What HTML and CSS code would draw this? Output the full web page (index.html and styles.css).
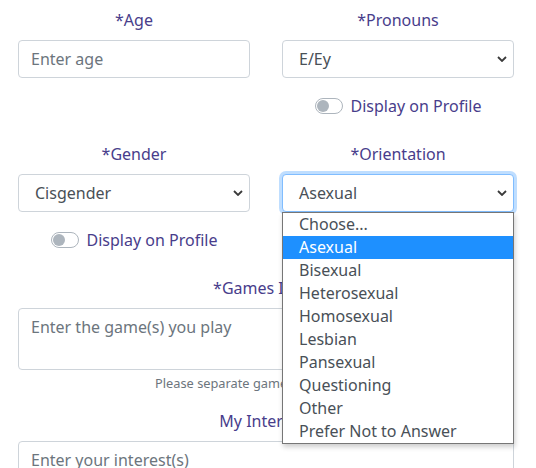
FILE: index.html
```html
<!DOCTYPE html>
<html lang="en">
<head>
<meta charset="utf-8">
<title>Profile form</title>
<link rel="stylesheet" href="styles.css">
</head>
<body>
<form class="form">
  <div class="row">
    <div class="group">
      <label class="label">*Age</label>
      <div class="control"><span class="placeholder">Enter age</span></div>
    </div>
    <div class="group">
      <label class="label">*Pronouns</label>
      <div class="control select">
        <span class="value">E/Ey</span>
        <svg class="chevron" width="10" height="6" viewBox="0 0 10 6"><path d="M1 1l4 4 4-4" fill="none" stroke="#3a3a3a" stroke-width="1.8"/></svg>
      </div>
      <div class="switch-row">
        <span class="switch"><span class="knob"></span></span>
        <span class="switch-label">Display on Profile</span>
      </div>
    </div>
  </div>
  <div class="row">
    <div class="group">
      <label class="label">*Gender</label>
      <div class="control select">
        <span class="value">Cisgender</span>
        <svg class="chevron" width="10" height="6" viewBox="0 0 10 6"><path d="M1 1l4 4 4-4" fill="none" stroke="#3a3a3a" stroke-width="1.8"/></svg>
      </div>
      <div class="switch-row">
        <span class="switch"><span class="knob"></span></span>
        <span class="switch-label">Display on Profile</span>
      </div>
    </div>
    <div class="group">
      <label class="label">*Orientation</label>
      <div class="select-wrap">
        <div class="control select focused">
          <span class="value">Asexual</span>
          <svg class="chevron" width="10" height="6" viewBox="0 0 10 6"><path d="M1 1l4 4 4-4" fill="none" stroke="#3a3a3a" stroke-width="1.8"/></svg>
        </div>
        <ul class="dropdown">
          <li class="option">Choose...</li>
          <li class="option selected">Asexual</li>
          <li class="option">Bisexual</li>
          <li class="option">Heterosexual</li>
          <li class="option">Homosexual</li>
          <li class="option">Lesbian</li>
          <li class="option">Pansexual</li>
          <li class="option">Questioning</li>
          <li class="option">Other</li>
          <li class="option">Prefer Not to Answer</li>
        </ul>
      </div>
    </div>
  </div>
  <div class="full">
    <label class="label">*Games I Play</label>
    <div class="control textarea"><span class="placeholder">Enter the game(s) you play</span></div>
    <small class="help">Please separate games with commas</small>
  </div>
  <div class="full">
    <label class="label">My Interests</label>
    <div class="control"><span class="placeholder">Enter your interest(s)</span></div>
  </div>
</form>
</body>
</html>
```
FILE: styles.css
```css
* { box-sizing: border-box; }
html, body { margin: 0; padding: 0; background: #fff; }
body {
  font-family: "Noto Sans", "Open Sans", sans-serif;
  font-size: 16px;
  line-height: 24px;
  color: #495057;
  overflow: hidden;
  height: 468px;
}
.form {
  padding: 8px 22px 0 18px;
}
.row {
  display: grid;
  grid-template-columns: 1fr 1fr;
  column-gap: 32px;
  margin-bottom: 24px;
}
.group { position: relative; }
.label {
  display: block;
  text-align: center;
  color: #483d8b;
  line-height: 24px;
  margin-bottom: 8px;
}
.control {
  height: 38px;
  border: 1px solid #ced4da;
  border-radius: 4px;
  background: #fff;
  padding: 6px 12px;
  display: flex;
  align-items: center;
}
.placeholder { color: #6c757d; }
.select { padding-left: 16px; padding-right: 6px; justify-content: space-between; }
.value { color: #495057; }
.chevron { flex: none; margin-right: 0; }
.focused {
  border-color: #80bdff;
  box-shadow: 0 0 0 3px rgba(0, 123, 255, 0.25);
}
.select-wrap { position: relative; }
.dropdown {
  position: absolute;
  top: 100%;
  left: 0;
  right: 0;
  margin: 0;
  padding: 0;
  list-style: none;
  background: #fff;
  border: 1px solid #767676;
  box-shadow: 1px 3px 5px rgba(0, 0, 0, 0.2);
  z-index: 10;
}
.option {
  height: 23px;
  line-height: 23px;
  padding-left: 16px;
  color: #495057;
  white-space: nowrap;
}
.option.selected { background: #1e90ff; color: #fff; }
.switch-row {
  margin-top: 16px;
  display: flex;
  justify-content: center;
  align-items: center;
  gap: 8px;
  height: 24px;
}
.switch {
  position: relative;
  width: 28px;
  height: 16px;
  border: 1px solid #adb5bd;
  border-radius: 8px;
  background: #fff;
}
.knob {
  position: absolute;
  top: 1px;
  left: 1px;
  width: 12px;
  height: 12px;
  border-radius: 50%;
  background: #adb5bd;
}
.switch-label { color: #483d8b; }
.full { margin-bottom: 16px; }
.textarea {
  height: 62px;
  align-items: flex-start;
}
.help {
  display: block;
  text-align: center;
  font-size: 12.8px;
  line-height: 19px;
  margin-top: 4px;
  color: #6c757d;
}
```
